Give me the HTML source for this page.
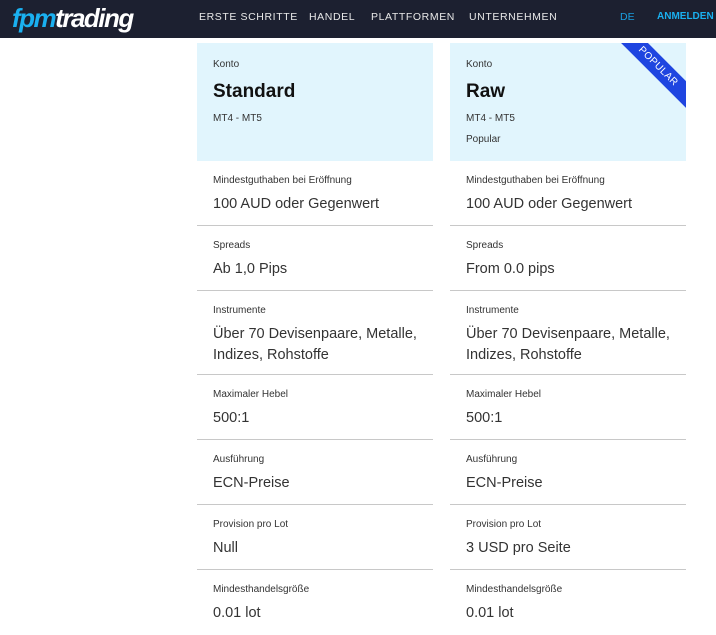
<!DOCTYPE html>
<html><head><meta charset="utf-8"><style>
*{margin:0;padding:0;box-sizing:border-box}
body{width:716px;height:624px;overflow:hidden;background:#fff;font-family:"Liberation Sans",sans-serif;position:relative;color:#1a1a1a}
.hdr{position:absolute;left:0;top:0;width:716px;height:38px;background:#1c2030}
.logo{position:absolute;left:12px;top:3px;font-size:26px;font-weight:bold;font-style:italic;letter-spacing:-1.5px;color:#fff}
.logo span{color:#1ab0f0}
.nav{position:absolute;top:11px;font-size:10.5px;color:#e8e8e8;letter-spacing:0.6px}
.card{position:absolute;top:43px;width:236px}
.top{height:118px;background:#e1f5fd;position:relative;overflow:hidden}
.k{position:absolute;left:16px;top:16px;font-size:10px;color:#333}
.t{position:absolute;left:16px;top:38px;font-size:19px;font-weight:bold;color:#111}
.m{position:absolute;left:16px;top:70px;font-size:10px;color:#333}
.p{position:absolute;left:16px;top:91px;font-size:10px;color:#333}
.row{border-bottom:1px solid #c8c8c8;padding:14px 16px 0;height:65px}
.row.tall{height:84px}
.l{font-size:10px;color:#333;margin-bottom:8px}
.v{font-size:14.5px;color:#333;line-height:21px}
.rib{position:absolute;right:-32px;top:14px;width:120px;height:19px;background:#1f45e0;color:#fff;font-size:10px;text-align:center;line-height:19px;transform:rotate(45deg);letter-spacing:.5px}
</style></head><body>
<div class="hdr">
<div class="logo"><span>fpm</span>trading</div>
<div class="nav" style="left:199px">ERSTE SCHRITTE</div>
<div class="nav" style="left:309px">HANDEL</div>
<div class="nav" style="left:371px">PLATTFORMEN</div>
<div class="nav" style="left:469px">UNTERNEHMEN</div>
<div class="nav" style="left:620px;color:#1a9fe0;letter-spacing:0">DE</div>
<div class="nav" style="left:657px;color:#1ab0f0;font-weight:bold;letter-spacing:0;font-size:10px">ANMELDEN</div>
</div>
<div class="card" style="left:197px">
<div class="top"><div class="k">Konto</div><div class="t">Standard</div><div class="m">MT4 - MT5</div></div>
<div class="row"><div class="l">Mindestguthaben bei Eröffnung</div><div class="v">100 AUD oder Gegenwert</div></div>
<div class="row"><div class="l">Spreads</div><div class="v">Ab 1,0 Pips</div></div>
<div class="row tall"><div class="l">Instrumente</div><div class="v">Über 70 Devisenpaare, Metalle, Indizes, Rohstoffe</div></div>
<div class="row"><div class="l">Maximaler Hebel</div><div class="v">500:1</div></div>
<div class="row"><div class="l">Ausführung</div><div class="v">ECN-Preise</div></div>
<div class="row"><div class="l">Provision pro Lot</div><div class="v">Null</div></div>
<div class="row" style="border:0"><div class="l">Mindesthandelsgröße</div><div class="v">0.01 lot</div></div>
</div>
<div class="card" style="left:450px">
<div class="top"><div class="k">Konto</div><div class="t">Raw</div><div class="m">MT4 - MT5</div><div class="p">Popular</div><div class="rib">POPULAR</div></div>
<div class="row"><div class="l">Mindestguthaben bei Eröffnung</div><div class="v">100 AUD oder Gegenwert</div></div>
<div class="row"><div class="l">Spreads</div><div class="v">From 0.0 pips</div></div>
<div class="row tall"><div class="l">Instrumente</div><div class="v">Über 70 Devisenpaare, Metalle, Indizes, Rohstoffe</div></div>
<div class="row"><div class="l">Maximaler Hebel</div><div class="v">500:1</div></div>
<div class="row"><div class="l">Ausführung</div><div class="v">ECN-Preise</div></div>
<div class="row"><div class="l">Provision pro Lot</div><div class="v">3 USD pro Seite</div></div>
<div class="row" style="border:0"><div class="l">Mindesthandelsgröße</div><div class="v">0.01 lot</div></div>
</div>
</body></html>
